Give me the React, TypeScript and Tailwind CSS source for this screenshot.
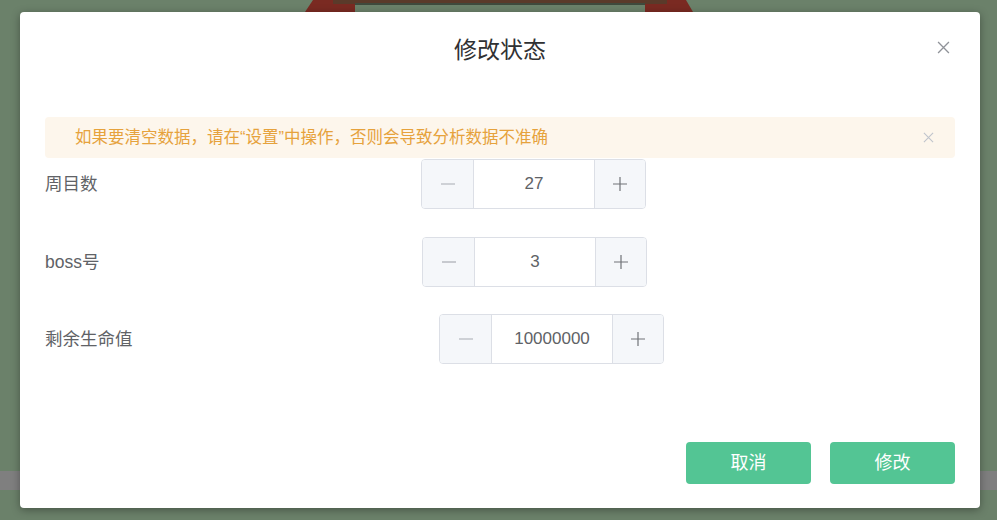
import { useState } from "react";

type Row = { label: string; value: number; offset: string; gap: string };

const rows: Row[] = [
  { label: "周目数", value: 27, offset: "ml-[376px]", gap: "mt-[1px]" },
  { label: "boss号", value: 3, offset: "ml-[377px]", gap: "mt-[28px]" },
  { label: "剩余生命值", value: 10000000, offset: "ml-[394px]", gap: "mt-[27px]" },
];

function CloseIcon({ size, className }: { size: number; className: string }) {
  return (
    <svg width={size} height={size} viewBox="0 0 12 12" className={className}>
      <path d="M1 1L11 11M11 1L1 11" stroke="currentColor" strokeWidth="1.2" fill="none" />
    </svg>
  );
}

function NumberInput({ value, className }: { value: number; className: string }) {
  const [n, setN] = useState(value);
  return (
    <div className={`flex h-[50px] w-[225px] overflow-hidden rounded-[4px] border border-[#dcdfe6] ${className}`}>
      <button
        type="button"
        onClick={() => setN(n - 1)}
        className="flex w-[52px] items-center justify-center border-r border-[#dcdfe6] bg-[#f5f7fa] text-[#a8abb2]"
      >
        <svg width="16" height="16" viewBox="0 0 16 16">
          <path d="M1 8H15" stroke="currentColor" strokeWidth="1.2" />
        </svg>
      </button>
      <div className="flex flex-1 items-center justify-center bg-white text-[17px] text-[#606266]">{n}</div>
      <button
        type="button"
        onClick={() => setN(n + 1)}
        className="flex w-[51px] items-center justify-center border-l border-[#dcdfe6] bg-[#f5f7fa] text-[#707277]"
      >
        <svg width="16" height="16" viewBox="0 0 16 16">
          <path d="M1 8H15M8 1V15" stroke="currentColor" strokeWidth="1.2" />
        </svg>
      </button>
    </div>
  );
}

export default function App() {
  const [alertOpen, setAlertOpen] = useState(true);

  return (
    <div
      className="relative h-[520px] w-[997px] overflow-hidden bg-[#6b816a] pt-[12px]"
      style={{ fontFamily: '"Liberation Sans", "Noto Sans CJK SC", sans-serif' }}
    >
      {/* page behind the dialog */}
      <svg width="997" height="14" className="absolute left-0 top-0">
        <polygon points="313,0 686,0 693,12 305,12" fill="#7a2a22" />
        <rect x="333" y="0" width="334" height="4" fill="#5a3a2a" />
        <rect x="355" y="3" width="290" height="10" fill="#6b816a" />
        <rect x="355" y="3" width="290" height="2" fill="#3f4a3d" />
      </svg>
      <div className="absolute left-0 top-[471px] h-[19px] w-full bg-[#7f7f7f]" />

      {/* dialog */}
      <div className="relative ml-[20px] flex h-[496px] w-[960px] flex-col rounded-[4px] bg-white shadow-[0_2px_8px_rgba(0,0,0,0.35)]">
        <div className="relative pt-[26px] text-center">
          <h2 className="text-[23px] leading-[24px] text-[#303133]">修改状态</h2>
          <button type="button" className="absolute right-[30px] top-[29px] text-[#909399]">
            <CloseIcon size={13} className="" />
          </button>
        </div>

        <div className="px-[25px] pt-[55px]">
          {alertOpen ? (
            <div className="flex h-[41px] items-center justify-between rounded-[4px] bg-[#fdf6ec] pl-[30px] pr-[21px]">
              <span className="text-[16.5px] text-[#e6a23c]">如果要清空数据，请在“设置”中操作，否则会导致分析数据不准确</span>
              <button type="button" onClick={() => setAlertOpen(false)} className="text-[#c0c4cc]">
                <CloseIcon size={11} className="" />
              </button>
            </div>
          ) : null}

          <div className="flex flex-col">
            {rows.map((r) => (
              <div key={r.label} className={`flex items-center ${r.gap}`}>
                <span className="w-0 whitespace-nowrap text-[17.5px] text-[#606266]">{r.label}</span>
                <NumberInput value={r.value} className={r.offset} />
              </div>
            ))}
          </div>
        </div>

        <div className="mt-auto flex justify-end gap-[19px] px-[25px] pb-[24px]">
          <button type="button" className="h-[42px] w-[125px] rounded-[4px] bg-[#53c594] text-[18px] text-white">
            取消
          </button>
          <button type="button" className="h-[42px] w-[125px] rounded-[4px] bg-[#53c594] text-[18px] text-white">
            修改
          </button>
        </div>
      </div>
    </div>
  );
}
